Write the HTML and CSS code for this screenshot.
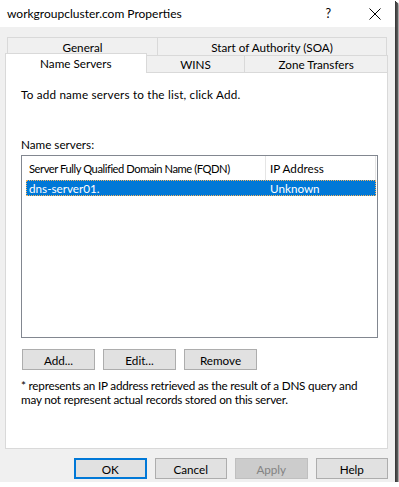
FILE: index.html
```html
<!DOCTYPE html>
<html>
<head>
<meta charset="utf-8">
<link rel="stylesheet" href="styles.css">
</head>
<body>
<div class="window">
  <div class="titlebar">
    <span class="title">workgroupcluster.com Properties</span>
    <span class="help">?</span>
    <svg class="close" width="12" height="12" viewBox="0 0 12 12"><path d="M0.5 0.5 L11.5 11.5 M11.5 0.5 L0.5 11.5" stroke="#000" stroke-width="1"/></svg>
  </div>
  <div class="body">
    <div class="tabrow row1">
      <div class="tab t-general">General</div>
      <div class="tab t-soa">Start of Authority (SOA)</div>
    </div>
    <div class="tabrow row2">
      <div class="tab t-ns selected">Name Servers</div>
      <div class="tab t-wins">WINS</div>
      <div class="tab t-zone">Zone Transfers</div>
    </div>
    <div class="panel">
      <div class="intro">To add name servers to the list, click Add.</div>
      <div class="label">Name servers:</div>
      <div class="listbox">
        <div class="lheader">
          <div class="hcol c1">Server Fully Qualified Domain Name (FQDN)</div>
          <div class="hcol c2">IP Address</div>
        </div>
        <div class="lrow selected">
          <div class="cell c1">dns-server01.</div>
          <div class="cell c2">Unknown</div>
        </div>
      </div>
      <div class="btnrow">
        <button class="btn">Add...</button>
        <button class="btn">Edit...</button>
        <button class="btn">Remove</button>
      </div>
      <div class="note">* represents an IP address retrieved as the result of a DNS query and may not represent actual records stored on this server.</div>
    </div>
    <div class="footer">
      <button class="btn default">OK</button>
      <button class="btn">Cancel</button>
      <button class="btn disabled">Apply</button>
      <button class="btn">Help</button>
    </div>
  </div>
</div>
</body>
</html>
```
FILE: styles.css
```css
html, body {
  margin: 0;
  padding: 0;
  background: #ffffff;
}
body {
  font-family: Lato, "Noto Sans", sans-serif;
  font-size: 11.7px;
  color: #000;
}
.window {
  width: 395px;
  height: 482px;
  background: #f0f0f0;
  box-shadow: 1px 1px 0 #3a3a3a, 2px 2px 0 #4a4a4a, 3px 3px 1px #5a5a5a, 4px 4px 2px #999;
  display: flex;
  flex-direction: column;
}
.titlebar {
  height: 27px;
  background: #fff;
  display: flex;
  align-items: center;
  padding-left: 7px;
  box-sizing: border-box;
}
.title {
  font-size: 12px;
  flex: 1;
}
.help {
  font-size: 12.5px;
  margin-right: 38px;
}
.close {
  margin-right: 14px;
}
.body {
  padding: 10px 7px 0 5px;
  display: flex;
  flex-direction: column;
}
.tabrow {
  display: flex;
  height: 18px;
}
.row1 {
  margin: 0 2px;
}
.tab {
  box-sizing: border-box;
  border: 1px solid #d9d9d9;
  background: #f0f0f0;
  display: flex;
  align-items: center;
  justify-content: center;
  margin-right: -1px;
  line-height: 14px;
  white-space: nowrap;
}
.row1 .tab {
  height: 18px;
  border-bottom: none;
}
.t-general { width: 151px; }
.t-soa { width: 230px; }
.row2 {
  align-items: flex-end;
  position: relative;
  z-index: 1;
  margin-bottom: -1px;
}
.row2 .tab {
  height: 18px;
}
.t-ns { width: 142px; }
.t-wins { width: 100px; }
.t-zone { width: 144px; margin-right: 0; }
.tab.selected {
  background: #fff;
  height: 20px !important;
  margin-top: -2px;
  border-bottom: none;
  position: relative;
  z-index: 2;
  padding-bottom: 2px;
}
.panel {
  box-sizing: border-box;
  width: 383px;
  height: 377px;
  background: #fff;
  border: 1px solid #d9d9d9;
  padding: 13px 0 0 15px;
  display: flex;
  flex-direction: column;
}
.intro {
  line-height: 16px;
  letter-spacing: 0.2px;
}
.label {
  margin-top: 34px;
  line-height: 16px;
}
.listbox {
  margin-top: 3px;
  box-sizing: border-box;
  width: 357px;
  height: 183px;
  border: 1px solid #828790;
  padding-left: 4px;
}
.lheader {
  display: flex;
  height: 24px;
  width: 350px;
}
.hcol {
  box-sizing: border-box;
  display: flex;
  align-items: center;
  padding-left: 3px;
  border-right: 1px solid #e5e5e5;
  white-space: nowrap;
}
.hcol.c1 {
  font-size: 11.2px;
  letter-spacing: -0.45px;
}
.c1 { width: 240px; }
.c2 { width: 110px; padding-left: 4px; }
.lrow {
  display: flex;
  height: 16px;
  width: 350px;
  box-sizing: border-box;
}
.lrow.selected {
  background: #0078d7;
  color: #fff;
  outline: 1px dotted #f7b55f;
  outline-offset: -1px;
}
.cell {
  box-sizing: border-box;
  display: flex;
  align-items: center;
  padding-left: 3px;
  white-space: nowrap;
}
.cell.c2 { padding-left: 4px; }
.btnrow {
  display: flex;
  gap: 8px;
  margin-top: 11px;
  margin-left: 1px;
}
.btn {
  box-sizing: border-box;
  width: 73px;
  height: 21px;
  background: #e1e1e1;
  border: 1px solid #adadad;
  font-family: inherit;
  font-size: 11.7px;
  color: #000;
  padding: 0;
  margin: 0;
}
.btn.default {
  border: 2px solid #0078d7;
}
.btn.disabled {
  background: #cccccc;
  border-color: #bfbfbf;
  color: #838383;
}
.note {
  margin-top: 8px;
  line-height: 14px;
  width: 345px;
  letter-spacing: -0.2px;
}
.footer {
  display: flex;
  gap: 8px;
  margin-top: 9px;
  padding-left: 69px;
}
```
